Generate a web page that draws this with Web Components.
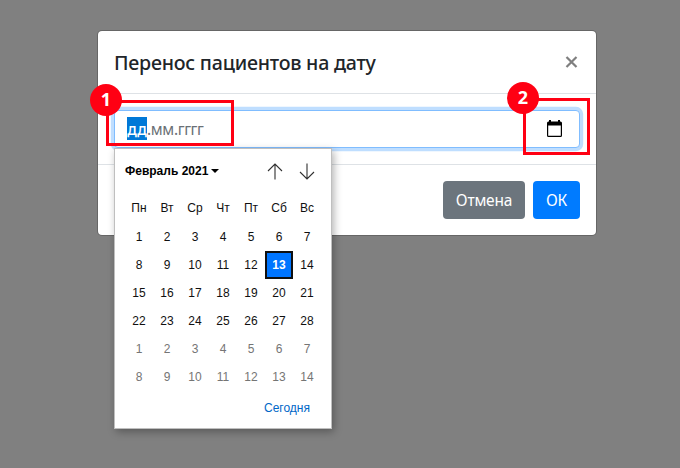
<!DOCTYPE html>
<html lang="ru"><head><meta charset="utf-8"><title>Перенос пациентов</title>
<style>
html,body{margin:0;width:680px;height:468px;overflow:hidden;background:#808080}
</style></head><body>
<transfer-page></transfer-page>
<script>
const define = (name, html, setup) => customElements.define(name, class extends HTMLElement {
  constructor() {
    super();
    const root = this.attachShadow({mode: 'open'});
    const t = document.createElement('template');
    t.innerHTML = html;
    root.append(t.content.cloneNode(true));
  }
  connectedCallback() { if (setup) setup(this, this.shadowRoot); }
});

define('app-button', `<style>
:host{display:block;box-sizing:border-box;height:38px;width:82px;border-radius:4px;background:#6c757d;color:#fff;font-size:15.500px;line-height:39px;letter-spacing:-.2px;text-align:center;white-space:nowrap}
:host([primary]){width:47px;background:#007bff}
</style><slot></slot>`);

define('date-field', `<style>
:host{display:flex;box-sizing:border-box;height:38px;border:1px solid #80bdff;border-radius:4px;box-shadow:0 0 0 3.2px #bfdeff;background:#fff;align-items:center;padding:0 17px 1px 12px;color:#6a7076;font-size:15.500px}
.v{display:flex;align-items:center;line-height:23px;flex:1}
b{display:block;width:20px;height:23px;background:#0078d7;color:#fff;font-weight:500;text-align:center;line-height:24px}
.r{letter-spacing:-.35px;line-height:24px}
svg{display:block;margin-bottom:1px}
</style><div class="v"><b>дд</b><span class="r">.мм.гггг</span></div>
<svg width="15" height="17" viewBox="0 0 15 17"><path fill="#000" fill-rule="evenodd" d="M2 0h2v1.500h7V0h2v1.500h.5A1.500 1.500 0 0 1 15 3v12.500a1.500 1.500 0 0 1-1.500 1.500h-12A1.500 1.500 0 0 1 0 15.500V3a1.500 1.500 0 0 1 1.500-1.500H2zM1.200 5.500v10.300h12.600V5.500z"/></svg>`);

define('modal-dialog', `<style>
:host{display:flex;flex-direction:column;box-sizing:border-box;width:500px;height:206px;background:#fff;background-clip:padding-box;border:1px solid rgba(0,0,0,.2);border-radius:5px}
header{display:flex;box-sizing:border-box;height:63px;border-bottom:1px solid #dee2e6;padding:0 18px 0 16px;align-items:center;justify-content:space-between}
.t{font-size:19.600px;font-weight:500;line-height:30px;padding-top:2px;letter-spacing:-.22px;white-space:nowrap;color:#212529}
main{flex:1;padding:16px 16px 0}
footer{display:flex;box-sizing:border-box;height:71px;border-top:1px solid #dee2e6;padding:16px 16px 0;gap:8px;justify-content:flex-end}
svg{display:block}
</style><header><div class="t"><slot name="title"></slot></div>
<svg width="13" height="12" viewBox="0 0 13 12"><path d="M1.500 1l10 10M11.500 1l-10 10" stroke="#7f7f7f" stroke-width="2.200" fill="none"/></svg></header>
<main><slot></slot></main><footer><slot name="actions"></slot></footer>`);

define('date-picker', `<style>
:host{display:flex;flex-direction:column;box-sizing:border-box;width:218px;height:281px;background:#fff;border:1px solid #bfbfbf;box-shadow:2px 3px 8px rgba(0,0,0,.3);font:12px "Liberation Sans",Arial,sans-serif;color:#101010}
.top{display:flex;height:45px;align-items:center;padding:0 16px 0 10px}
.m{font-weight:700;color:#000;white-space:nowrap;padding-bottom:2px}
.tri{width:0;height:0;border:4px solid transparent;border-top:4px solid #000;border-bottom:0;margin:0 0 1px 3px}
.ar{display:flex;margin-left:auto;gap:16px}
.grid{display:grid;grid-template-columns:repeat(7,28px);padding-left:10px}
.grid>*{height:28px;line-height:28px;text-align:center;box-sizing:border-box}
.w{margin-bottom:1px}
.out{color:#757575}
.sel{background:#0075ff;border:2px solid #101010;color:#fff;font-weight:700;line-height:24px}
.today{color:#0067c7;text-align:right;padding:10px 21px 0 0;line-height:14px}
</style><div class="top"><span class="m">Февраль 2021</span><i class="tri"></i>
<div class="ar"><svg width="16" height="17" viewBox="0 0 16 17"><path d="M8 1v15.500M1 8l7-7 7 7" fill="none" stroke="#303030" stroke-width="1.100"/></svg>
<svg width="16" height="17" viewBox="0 0 16 17"><path d="M8 .5V16M1 9l7 7 7-7" fill="none" stroke="#303030" stroke-width="1.100"/></svg></div></div>
<div class="grid"></div><div class="today">Сегодня</div>`, (el, root) => {
  const g = root.querySelector('.grid');
  const add = (text, cls) => { const d = document.createElement('div'); d.textContent = text; d.className = cls; g.append(d); };
  ['Пн','Вт','Ср','Чт','Пт','Сб','Вс'].forEach(d => add(d, 'w'));
  for (let i = 1; i <= 28; i++) add(i, i === 13 ? 'sel' : '');
  for (let i = 1; i <= 14; i++) add(i, 'out');
});

define('step-mark', `<style>
:host{display:block;box-sizing:border-box;border:3px solid #ff0013}
div{position:absolute;left:-19px;top:-19px;width:32px;height:32px;border-radius:50%;background:#ff0013;color:#fff;font-size:18px;font-weight:700;line-height:31px;text-align:center}
</style><div><slot></slot></div>`);

define('transfer-page', `<style>
:host{display:flex;justify-content:center;align-items:flex-start;box-sizing:border-box;position:relative;width:680px;height:468px;padding:30px 0 0 14px;background:#808080;font-family:"Noto Sans","Open Sans",sans-serif}
date-picker{position:absolute;left:114px;top:148px}
step-mark{position:absolute}
.one{left:106px;top:100px;width:128px;height:46px}
.two{left:523px;top:98px;width:67px;height:57px}
</style><modal-dialog><span slot="title">Перенос пациентов на дату</span>
<date-field></date-field>
<app-button slot="actions">Отмена</app-button><app-button slot="actions" primary>ОК</app-button></modal-dialog>
<date-picker></date-picker><step-mark class="one">1</step-mark><step-mark class="two">2</step-mark>`);
</script></body></html>
